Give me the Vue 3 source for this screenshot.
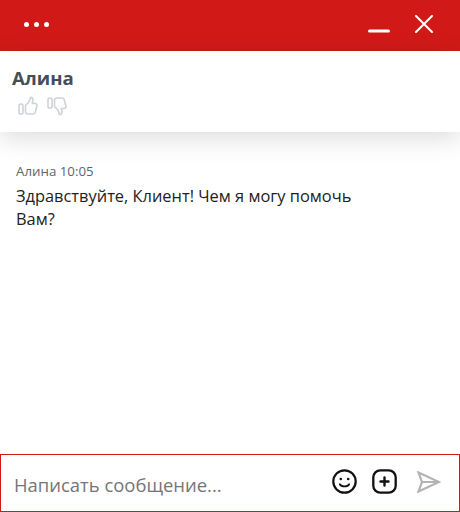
<script setup>
const message = {
  author: 'Алина',
  time: '10:05',
  text: 'Здравствуйте, Клиент! Чем я могу помочь Вам?'
}
</script>

<template>
  <div class="chat">
    <div class="topbar">
      <div class="dots">
        <span class="dot"></span>
        <span class="dot"></span>
        <span class="dot"></span>
      </div>
      <div class="winButtons">
        <svg width="22" height="22" viewBox="0 0 22 22">
          <path d="M1.5 18H20.5" stroke="#fff" stroke-width="3" stroke-linecap="round" fill="none" />
        </svg>
        <svg width="18" height="18" viewBox="0 0 18 18">
          <path d="M1 1L17 17M17 1L1 17" stroke="#fff" stroke-width="2" stroke-linecap="round" fill="none" />
        </svg>
      </div>
    </div>

    <div class="agent">
      <div class="agentName">{{ message.author }}</div>
      <div class="rating">
        <svg width="20" height="20" viewBox="0 0 20 20" fill="none" stroke="#cfd3d7" stroke-width="1.6" stroke-linejoin="round">
          <rect x="1" y="8" width="4" height="10" rx="1.8" />
          <path d="M7.5 9.5L10.5 6.5C11.5 5 12 3 12.5 1.5C14.5 1 15.2 3 14.8 5L14.2 7.5H17C18.5 7.5 19.2 8.6 18.9 9.8L17.2 16.5C16.8 17.6 16 18 15 18H10.5C8.8 18 7.5 17.5 7.5 16Z" />
        </svg>
        <svg width="20" height="20" viewBox="0 0 20 20" fill="none" stroke="#cfd3d7" stroke-width="1.6" stroke-linejoin="round">
          <rect x="1" y="2" width="4" height="10" rx="1.8" />
          <path d="M7.5 10.5L10.5 13.5C11.5 15 12 17 12.5 18.5C14.5 19 15.2 17 14.8 15L14.2 12.5H17C18.5 12.5 19.2 11.4 18.9 10.2L17.2 3.5C16.8 2.4 16 2 15 2H10.5C8.8 2 7.5 2.5 7.5 4Z" />
        </svg>
      </div>
    </div>

    <div class="messages">
      <div class="meta">{{ message.author }} {{ message.time }}</div>
      <div class="text">{{ message.text }}</div>
    </div>

    <div class="composer">
      <div class="placeholder">Написать сообщение...</div>
      <div class="actions">
        <svg width="25" height="25" viewBox="0 0 25 25" fill="none" stroke="#111" stroke-width="2.2">
          <circle cx="12.5" cy="12.5" r="11.2" />
          <circle cx="8.8" cy="10" r="1.3" fill="#111" stroke="none" />
          <circle cx="16.2" cy="10" r="1.3" fill="#111" stroke="none" />
          <path d="M7.8 15.2C9.5 18.2 15.5 18.2 17.2 15.2" stroke-width="1.8" stroke-linecap="round" />
        </svg>
        <svg width="25" height="25" viewBox="0 0 25 25" fill="none" stroke="#111" stroke-width="2.3">
          <rect x="1.3" y="1.3" width="22.4" height="22.4" rx="7" />
          <path d="M12.5 8.5V16.5M8.5 12.5H16.5" stroke-width="2.4" stroke-linecap="round" />
        </svg>
        <svg class="send" width="24" height="22" viewBox="0 0 24 22" fill="none" stroke="#b4b4b4" stroke-width="2.2">
          <path d="M1.5 1.5L22 11L1.5 20.5L5 11ZM5 11H22" />
        </svg>
      </div>
    </div>
  </div>
</template>

<style>
html, body {
  margin: 0;
  background: #fff;
}
</style>

<style scoped>
.chat {
  width: 460px;
  height: 512px;
  display: flex;
  flex-direction: column;
  font-family: "Open Sans", "Noto Sans", sans-serif;
  background: #fff;
  overflow: hidden;
}

.topbar {
  height: 51px;
  flex-shrink: 0;
  box-sizing: border-box;
  background: #d11a17;
  display: flex;
  align-items: center;
  justify-content: space-between;
  padding: 0 27px 3px 23.5px;
}

.dots {
  display: flex;
  gap: 5px;
}

.dot {
  width: 5px;
  height: 5px;
  border-radius: 50%;
  background: #fff;
}

.winButtons {
  display: flex;
  align-items: center;
  gap: 25px;
}

.agent {
  height: 81px;
  flex-shrink: 0;
  box-sizing: border-box;
  padding: 15px 12px 0;
  box-shadow: 0 6px 24px rgba(0, 0, 0, 0.14);
  position: relative;
}

.agentName {
  font-size: 18.6px;
  line-height: 24px;
  font-weight: 700;
  color: #454e58;
}

.rating {
  display: flex;
  gap: 9px;
  padding-left: 6px;
  margin-top: 6px;
}

.messages {
  flex: 1;
  padding: 30px 16px 0;
}

.meta {
  font-size: 13.3px;
  line-height: 18px;
  color: #5c6670;
}

.text {
  width: 350px;
  margin-top: 4px;
  font-size: 16.4px;
  line-height: 23px;
  color: #222;
}

.composer {
  height: 58px;
  flex-shrink: 0;
  box-sizing: border-box;
  border: 1px solid #d11a17;
  display: flex;
  align-items: center;
  justify-content: space-between;
  padding: 0 18px 3px 13px;
}

.placeholder {
  font-size: 18.45px;
  color: #757575;
  margin-top: 5px;
}

.actions {
  display: flex;
  align-items: center;
  gap: 15px;
}

.send {
  margin-left: 5px;
}
</style>
